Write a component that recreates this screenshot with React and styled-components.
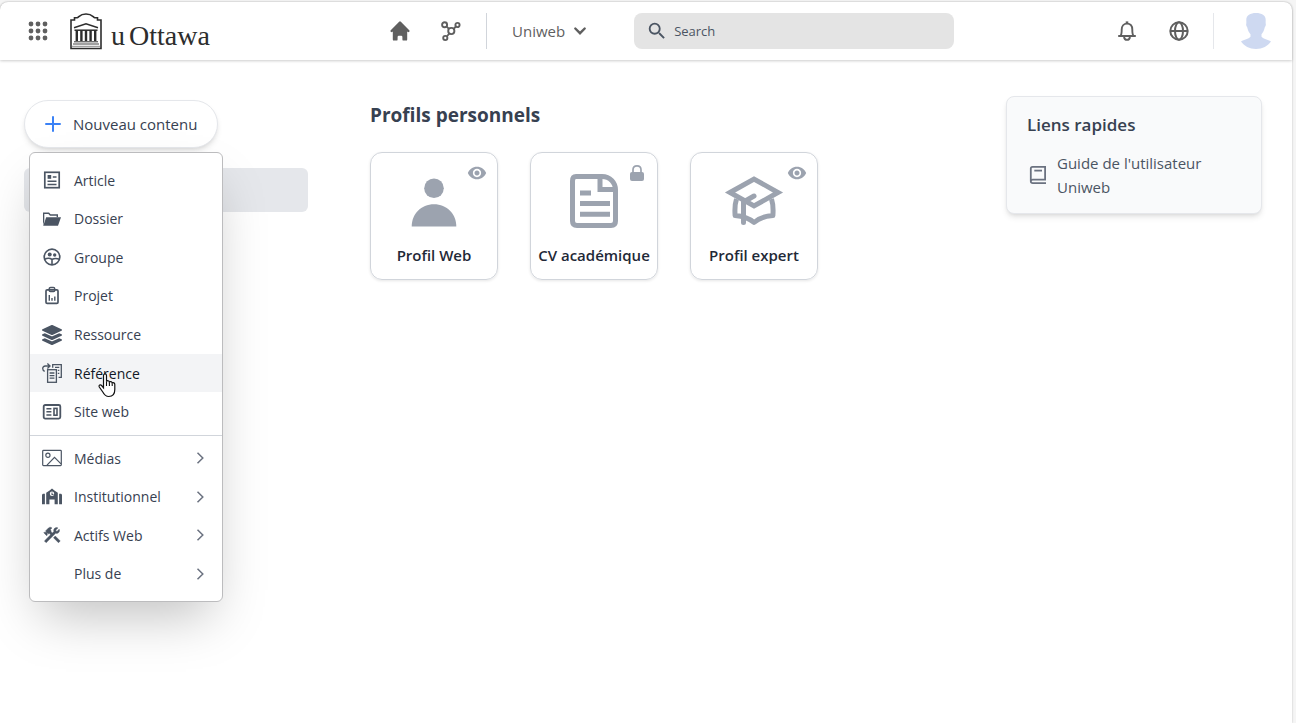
import React from 'react'
import styled, { createGlobalStyle } from 'styled-components'
import { HiHome } from 'react-icons/hi'
import { FaLayerGroup } from 'react-icons/fa'
import { MdSearch, MdVisibility } from 'react-icons/md'

const AppsIcon = () => (
  <svg width="20" height="20" viewBox="0 0 20 20" fill="currentColor">
    {[3, 10, 17].map((y) => [3, 10, 17].map((x) => (
      <circle key={`${x}-${y}`} cx={x} cy={y} r="2.4" />
    )))}
  </svg>
)

const TabaretIcon = () => (
  <svg width="32" height="37" viewBox="0 0 32 37" fill="none" stroke="#2d2d2d">
    <path d="M1 35.500V7h3.500V4.800H7C9 4.600 9.400 1 16 1s7 3.600 9 3.800h2.500V7H31v28.500z" strokeWidth="1.600" />
    <path d="M4 14.800L16 10.800l12 4" strokeWidth="1.500" />
    <path d="M4.500 17.200h23" strokeWidth="1.500" />
    <path d="M6.800 17v11M11.400 17v11M16 17v11M20.600 17v11M25.200 17v11" strokeWidth="2.400" />
    <path d="M4 28.800h24" strokeWidth="1" />
    <path d="M3 31h26" stroke="#8a8a8a" strokeWidth="1.600" />
    <path d="M2 33.300h28" stroke="#8a8a8a" strokeWidth="1" />
  </svg>
)

const NetworkIcon = () => (
  <svg width="24" height="24" viewBox="-4 -2 24 24" fill="none" stroke="currentColor" strokeWidth="1.900">
    <circle cx="3.600" cy="3.700" r="2.500" />
    <circle cx="16.500" cy="4" r="2.100" />
    <circle cx="10.300" cy="10" r="3.100" />
    <circle cx="4.300" cy="17" r="2.100" />
    <path d="M5.400 5.400l2.600 2.500M12.600 7.900l2.400-2.400M8.300 12.500l-2.500 3" />
  </svg>
)

const BellIcon = () => (
  <svg width="20" height="20" viewBox="0 0 20 20" fill="none" stroke="currentColor" strokeWidth="1.900">
    <path d="M1.200 15h17.600M3.400 15c1.200-1 1.300-2.600 1.300-6.400C4.700 5 6.700 2.600 10 2.600s5.300 2.400 5.300 6c0 3.800.1 5.400 1.300 6.400" />
    <path d="M10 .4v2" strokeWidth="2.600" />
    <path d="M7 16c.3 1.900 1.400 2.900 3 2.900s2.700-1 3-2.900" />
  </svg>
)

const GlobeIcon = () => (
  <svg width="20" height="20" viewBox="0 0 20 20" fill="none" stroke="currentColor" strokeWidth="2">
    <circle cx="10" cy="10" r="8.700" />
    <ellipse cx="10" cy="10" rx="4" ry="8.700" />
    <path d="M1.300 10h17.400" />
  </svg>
)

const AvatarIcon = () => (
  <svg width="32" height="36" viewBox="0 0 32 36" fill="#ced9f1">
    <path d="M16 0c5.500 0 10 2 9.700 7.500 0 1.200-.2 2 0 3 .5 1.500-.3 3-.9 3.700-.6 3-1.700 5.300-3.300 7v2.600c2 2.600 6.300 2.700 9.500 4.700C28 33 22.500 36 16 36S4 33 1 28.500c3.200-2 7.500-2.100 9.500-4.700v-2.600c-1.600-1.700-2.700-4-3.300-7-.6-.7-1.400-2.200-.9-3.700.2-1 0-1.800 0-3C6 2 10.500 0 16 0z" />
  </svg>
)

const ChevronDown = () => (
  <svg width="14" height="14" viewBox="0 0 14 14" fill="none" stroke="currentColor" strokeWidth="2.400" strokeLinecap="round">
    <path d="M2.300 4.500L7 9.200l4.700-4.700" />
  </svg>
)

const ChevronRight = () => (
  <svg width="12" height="12" viewBox="0 0 12 12" fill="none" stroke="#6b7280" strokeWidth="1.500">
    <path d="M3.500 .8L8.800 6l-5.300 5.200" />
  </svg>
)

const PlusIcon = () => (
  <svg width="16" height="16" viewBox="0 0 16 16" stroke="#3b82f6" strokeWidth="2" strokeLinecap="round">
    <path d="M8 1v14M1 8h14" />
  </svg>
)

const ArticleIcon = () => (
  <svg width="20" height="20" viewBox="0 0 20 20" fill="none" stroke="currentColor" strokeWidth="1.700">
    <rect x="2.800" y="2.300" width="14.400" height="15.400" />
    <path d="M5.500 11.300h9M5.500 14.500h9M10.800 7h3.700" strokeWidth="1.500" />
    <rect x="5.600" y="5" width="3.600" height="3.800" fill="currentColor" stroke="none" />
  </svg>
)

const FolderIcon = () => (
  <svg width="20" height="20" viewBox="0 0 20 20" fill="currentColor">
    <path d="M1 3.500h6l1.600 1.800H16v3h-1.400V6.700H8L6.400 5H2.300v7L1 16.300z" />
    <path d="M4.200 8.300H19l-3 8.400H1.200z" />
  </svg>
)

const GroupIcon = () => (
  <svg width="20" height="20" viewBox="0 0 20 20" fill="none" stroke="currentColor" strokeWidth="1.700">
    <circle cx="10" cy="10" r="7.800" />
    <circle cx="7.700" cy="7.400" r="2" fill="currentColor" stroke="none" />
    <circle cx="12.700" cy="8" r="1.700" fill="currentColor" stroke="none" />
    <path d="M2.600 12.300c2.800-1.500 5.500-1.300 7.400.2 2-1.200 4.600-1.400 7.400-.2M10 12.300v5.500" strokeWidth="1.600" />
  </svg>
)

const ProjectIcon = () => (
  <svg width="20" height="20" viewBox="0 0 20 20" fill="none" stroke="currentColor" strokeWidth="1.700">
    <rect x="4" y="3.800" width="12" height="13.600" rx="1.200" />
    <path d="M7.200 4.300V3c0-1 .6-1.500 1.500-1.500h2.600c.9 0 1.500.5 1.500 1.500v1.300c0 .8-.4 1.200-1.200 1.200H8.400c-.8 0-1.200-.4-1.200-1.200z" strokeWidth="1.400" />
    <path d="M7.300 9v5.800M10 12v2.800M12.800 10.500v4.300" strokeWidth="1.400" />
  </svg>
)

const ReferenceIcon = () => (
  <svg width="20" height="20" viewBox="0 0 20 20" fill="none" stroke="currentColor" strokeWidth="1.300">
    <rect x="5.600" y="6.700" width="8.800" height="12.600" />
    <path d="M7.600 10h4.800M7.600 12.600h4.800M7.600 15.200h4.800" />
    <path d="M10.700 4.800V1.700h8.600v12.600h-2.700M13 4.400h4.300M15.800 7.300h1.500M15.800 10.300h1.500" />
    <path d="M2.700 8.300C1.200 7.800.7 6.800.7 5.600c0-1.600 1-2.600 2.600-2.600h4.500M5.400.6L8 3 5.400 5.400" />
  </svg>
)

const SiteIcon = () => (
  <svg width="20" height="20" viewBox="0 0 20 20" fill="none" stroke="currentColor" strokeWidth="1.800">
    <rect x="1.700" y="3" width="16.600" height="13.600" rx="1.500" />
    <rect x="12" y="6.400" width="3" height="6.800" strokeWidth="1.600" />
    <path d="M4.400 6.700h5M4.400 9.800h5M4.400 12.900h5" strokeWidth="1.500" />
  </svg>
)

const MediaIcon = () => (
  <svg width="20" height="20" viewBox="0 0 20 20" fill="none" stroke="currentColor" strokeWidth="1.200">
    <rect x=".7" y="2.400" width="18.600" height="15.200" rx=".8" />
    <circle cx="5.900" cy="7.300" r="2.100" />
    <path d="M5 17.200l7.500-7.900 6.500 6.600" />
  </svg>
)

const InstitutionIcon = () => (
  <svg width="20" height="20" viewBox="0 0 20 20" fill="currentColor">
    <path d="M0 7.700l.9-.9h2v10.400H0zM17.100 6.800h2l.9.900v9.500h-2.900z" />
    <path fillRule="evenodd" d="M4.200 17.200V5.800L7.600 3.400 10 1.600l2.400 1.800 3.400 2.400v11.400h-3.200v-4.700H7.400v4.700zM10 4.600a2.200 2.200 0 100 4.400 2.200 2.200 0 000-4.400z" />
    <path d="M9.500 5.500h1V7h1v1h-2z" />
  </svg>
)

const ToolsIcon = () => (
  <svg width="20" height="20" viewBox="0 0 24 24" fill="currentColor" stroke="currentColor" strokeWidth=".5">
    <path d="M13.780 15.300l6 6 2.110-2.160-6-6zM17.500 10.100c-.390 0-.810-.050-1.140-.190L4.970 21.250l-2.110-2.110 7.410-7.400L8.500 9.960l-.720.700-1.450-1.410v2.860l-.700.700-3.520-3.560.700-.700h2.810l-1.400-1.410 3.560-3.560c1.170-1.170 3.050-1.170 4.220 0L9.890 5.740l1.410 1.400-.710.710 1.790 1.780 1.820-1.880c-.140-.330-.200-.750-.200-1.120 0-1.970 1.560-3.520 3.500-3.520.590 0 1.110.140 1.580.420L16.410 6.200l1.500 1.500 2.670-2.670c.280.470.420.970.420 1.600 0 1.920-1.550 3.470-3.500 3.470z" />
  </svg>
)

const PersonIcon = () => (
  <svg width="64" height="64" viewBox="0 0 64 64" fill="currentColor">
    <circle cx="32" cy="20.300" r="9.800" />
    <path d="M9.700 58.500C9.700 46 19 36.200 32 36.200s22.300 9.800 22.300 22.300z" />
  </svg>
)

const ResumeIcon = () => (
  <svg width="64" height="64" viewBox="0 0 64 64" fill="none" stroke="currentColor" strokeWidth="5">
    <path d="M14 8.500h26c8 0 13.500 6 13.500 13.500v31c0 3-1.500 4.500-4.500 4.500H15c-3 0-4.500-1.500-4.500-4.500V13c0-3 1-4.500 3.500-4.500z" />
    <path d="M38 9v12.500H53M18 25h11M18 35.500h30M18 46.200h30" />
  </svg>
)

const GraduateIcon = () => (
  <svg width="64" height="64" viewBox="0 0 64 64" fill="none" stroke="currentColor" strokeWidth="5">
    <path d="M8 24.500L32 11l24 13.500L32 38z" />
    <path d="M32 28l-10.500 6v20.500" strokeLinecap="round" />
    <path d="M14.500 31c-2 6-1.800 11-1.400 16.500 8 .6 14 2.600 18.900 7 4.900-4.400 10.900-6.400 18.900-7 .4-5.500.6-10.500-1.400-16.500" strokeLinejoin="round" />
  </svg>
)

const LockIcon = () => (
  <svg width="20" height="20" viewBox="0 0 20 20" fill="currentColor">
    <rect x="3" y="9" width="14" height="9" rx="2" />
    <path d="M6 10V6.800C6 4.300 7.500 2.900 10 2.900s4 1.400 4 3.900V10" fill="none" stroke="currentColor" strokeWidth="1.700" />
  </svg>
)

const BookIcon = () => (
  <svg width="22" height="22" viewBox="0 0 22 22" fill="none" stroke="#6b7280" strokeWidth="1.800">
    <path d="M19 19.200H5.800c-1.300 0-2-.8-2-2V4.600c0-1 .6-1.700 1.700-1.700h12.600v12.700H5.800c-1.300 0-2 .7-2 1.700" />
    <path d="M7.300 6.600h7.700" />
  </svg>
)

const HandCursor = () => (
  <svg width="18" height="25" viewBox="0 0 18 25">
    <path
      d="M5.500 14.800V2.500C5.500.400 8.500.400 8.500 2.500v6c.5-1.200 2.700-1 2.900.6.800-.9 2.500-.6 2.800.9 1-.7 2.600-.2 2.600 1.500v5c0 4-2 7-6 7-3.200 0-4.500-1.500-6-4.500L1.300 14c-.8-1.700 1-3 2.300-1.500z"
      fill="#fff"
      stroke="#111"
      strokeWidth="1.200"
    />
    <path d="M8.500 8.500v4.500M11.400 9.500v3.500M14.200 10.500V13" stroke="#111" strokeWidth="1.100" fill="none" />
  </svg>
)

const contentTypes = [
  { label: 'Article', icon: <ArticleIcon /> },
  { label: 'Dossier', icon: <FolderIcon /> },
  { label: 'Groupe', icon: <GroupIcon /> },
  { label: 'Projet', icon: <ProjectIcon /> },
  { label: 'Ressource', icon: <FaLayerGroup size={20} /> },
  { label: 'Référence', icon: <ReferenceIcon />, active: true },
  { label: 'Site web', icon: <SiteIcon /> },
]

const submenus = [
  { label: 'Médias', icon: <MediaIcon /> },
  { label: 'Institutionnel', icon: <InstitutionIcon /> },
  { label: 'Actifs Web', icon: <ToolsIcon /> },
  { label: 'Plus de' },
]

const profiles = [
  { label: 'Profil Web', icon: <PersonIcon />, badge: <MdVisibility size={20} /> },
  { label: 'CV académique', icon: <ResumeIcon />, badge: <LockIcon /> },
  { label: 'Profil expert', icon: <GraduateIcon />, badge: <MdVisibility size={20} /> },
]

const App = () => {
  return (
    <>
      <Global />
      <Shell>
        <Header>
          <Brand>
            <IconButton aria-label="Applications"><AppsIcon /></IconButton>
            <Logo href="#">
              <TabaretIcon />
              <LogoText>
                <span>u</span>
                <span>Ottawa</span>
              </LogoText>
            </Logo>
          </Brand>
          <Nav>
            <NavLink href="#" aria-label="Accueil"><HiHome size={24} /></NavLink>
            <NavLink href="#" aria-label="Réseau"><NetworkIcon /></NavLink>
            <Divider $color="#d1d5db" />
            <Switcher>Uniweb <ChevronDown /></Switcher>
          </Nav>
          <SearchBox>
            <MdSearch size={22} />
            <SearchInput type="search" placeholder="Search" aria-label="Search" />
          </SearchBox>
          <Account>
            <IconButton aria-label="Notifications"><BellIcon /></IconButton>
            <IconButton aria-label="Langue"><GlobeIcon /></IconButton>
            <Divider $color="#e5e7eb" />
            <IconButton aria-label="Compte"><AvatarIcon /></IconButton>
          </Account>
        </Header>

        <Body>
          <Sidebar>
            <Create>
              <CreateButton aria-haspopup="menu" aria-expanded="true">
                <PlusIcon />
                Nouveau contenu
              </CreateButton>
              <Menu>
                <MenuList $height={270}>
                  {contentTypes.map((item) => (
                    <MenuRow key={item.label}>
                      <MenuButton $active={item.active}>
                        <MenuIcon>{item.icon}</MenuIcon>
                        <MenuText>{item.label}</MenuText>
                      </MenuButton>
                      {item.active && <Pointer><HandCursor /></Pointer>}
                    </MenuRow>
                  ))}
                </MenuList>
                <Separator />
                <MenuList $height={154}>
                  {submenus.map((item) => (
                    <MenuRow key={item.label}>
                      <MenuButton>
                        <MenuIcon>{item.icon}</MenuIcon>
                        <MenuText>{item.label}</MenuText>
                        <ChevronRight />
                      </MenuButton>
                    </MenuRow>
                  ))}
                </MenuList>
              </Menu>
            </Create>
            <Selected />
          </Sidebar>

          <Main>
            <Title>Profils personnels</Title>
            <Cards>
              {profiles.map((p) => (
                <Card key={p.label} href="#">
                  <Badge>{p.badge}</Badge>
                  {p.icon}
                  <CardLabel>{p.label}</CardLabel>
                </Card>
              ))}
            </Cards>
          </Main>

          <Links>
            <LinksTitle>Liens rapides</LinksTitle>
            <QuickLink href="#">
              <BookIcon />
              <LinkText>Guide de l'utilisateur Uniweb</LinkText>
            </QuickLink>
          </Links>
        </Body>
      </Shell>
    </>
  )
}

export default App

const Global = createGlobalStyle`
* { box-sizing: border-box; }
body {
  margin: 0;
  background: #f5f5f5;
  color: #374151;
  font-family: 'Segoe UI', 'Open Sans', 'Noto Sans', sans-serif;
  font-size: 15px;
}
button, input {
  font: inherit;
  color: inherit;
  border: 0;
  padding: 0;
  background: none;
}
button { cursor: pointer; }
a { color: inherit; text-decoration: none; }
svg { display: block; flex: none; }
`

const Shell = styled.div`
margin: 2px 4px 0 0;
min-height: calc(100vh - 2px);
background: #fff;
border-radius: 8px 8px 0 0;
box-shadow: 0 0 2px rgba(0, 0, 0, 0.25);
`

const Header = styled.header`
display: flex;
align-items: center;
height: 58px;
padding: 0 20px 0 28px;
border-radius: 8px 8px 0 0;
box-shadow: 0 1px 3px rgba(0, 0, 0, 0.2);
`

const Brand = styled.div`
display: flex;
align-items: center;
gap: 22px;
width: 360px;
`

const Logo = styled.a`
display: flex;
align-items: center;
gap: 9px;
`

const LogoText = styled.span`
display: flex;
gap: 4px;
padding-top: 9px;
font-family: 'Liberation Serif', serif;
font-size: 28px;
line-height: 28px;
color: #2d2d2d;
`

const IconButton = styled.button`
display: flex;
color: #5f5f5f;
`

const Nav = styled.nav`
display: flex;
align-items: center;
gap: 25px;
color: #5f5f5f;
`

const NavLink = styled.a`
display: flex;
`

const Divider = styled.span`
width: 1px;
height: 36px;
background: ${(p) => p.$color};
`

const Switcher = styled.button`
display: flex;
align-items: center;
gap: 8px;
`

const SearchBox = styled.label`
display: flex;
align-items: center;
gap: 6px;
width: 320px;
height: 36px;
margin-left: 47px;
padding: 0 12px;
border-radius: 8px;
background: #e4e4e4;
color: #4b5563;
`

const SearchInput = styled.input`
flex: 1;
min-width: 0;
font-size: 13px;
outline: none;
&::placeholder {
  color: #4b5563;
  opacity: 1;
}
`

const Account = styled.div`
display: flex;
align-items: center;
margin-left: auto;
& > :nth-child(2) { margin: 0 24px 0 32px; }
& > :last-child { margin-left: 26px; }
`

const Body = styled.div`
display: flex;
align-items: flex-start;
padding: 36px 30px 0 24px;
`

const Sidebar = styled.aside`
width: 284px;
margin: 4px 62px 0 0;
`

const Create = styled.div`
position: relative;
width: max-content;
margin-bottom: 20px;
`

const CreateButton = styled.button`
display: flex;
align-items: center;
gap: 12px;
height: 48px;
padding: 0 20px;
border: 1px solid #e5e7eb;
border-radius: 24px;
background: #fff;
box-shadow: 0 4px 6px -1px rgba(0, 0, 0, 0.1), 0 2px 4px -2px rgba(0, 0, 0, 0.1);
`

const Menu = styled.div`
position: absolute;
top: 52px;
left: 5px;
z-index: 1;
width: 194px;
padding: 8px 0;
border: 1px solid #bcbcbe;
border-radius: 6px;
background: #fff;
box-shadow: 0 25px 50px -12px rgba(0, 0, 0, 0.25);
`

const MenuList = styled.ul`
display: grid;
grid-auto-rows: 1fr;
height: ${(p) => p.$height}px;
margin: 0;
padding: 0;
list-style: none;
`

const MenuRow = styled.li`
position: relative;
display: flex;
`

const MenuButton = styled.button`
flex: 1;
display: flex;
align-items: center;
gap: 12px;
padding: 0 16px 0 12px;
font-size: 14px;
text-align: left;
color: ${(p) => (p.$active ? '#111827' : '#374151')};
background: ${(p) => (p.$active ? '#f3f4f6' : 'transparent')};
`

const MenuIcon = styled.span`
width: 20px;
height: 20px;
color: #4b5563;
`

const MenuText = styled.span`
flex: 1;
`

const Pointer = styled.span`
position: absolute;
top: 19px;
left: 68px;
pointer-events: none;
`

const Separator = styled.hr`
height: 1px;
margin: 4px 0 3px;
border: 0;
background: #d1d5db;
`

const Selected = styled.div`
height: 44px;
border-radius: 6px;
background: #e5e7eb;
`

const Main = styled.main`
flex: 1;
`

const Title = styled.h1`
margin: 4px 0 22px;
font-size: 19px;
line-height: 30px;
font-weight: 700;
`

const Cards = styled.div`
display: flex;
flex-wrap: wrap;
gap: 32px;
`

const Card = styled.a`
position: relative;
display: flex;
flex-direction: column;
align-items: center;
width: 128px;
height: 128px;
padding-top: 15px;
border: 1px solid #d1d5db;
border-radius: 12px;
color: #9ca3af;
box-shadow: 0 1px 3px rgba(0, 0, 0, 0.1);
`

const Badge = styled.span`
position: absolute;
top: 10px;
right: 10px;
`

const CardLabel = styled.span`
margin-top: 11px;
font-size: 15px;
line-height: 24px;
font-weight: 600;
color: #1f2937;
white-space: nowrap;
`

const Links = styled.section`
width: 256px;
padding: 15px 20px 14px;
border: 1px solid #e5e7eb;
border-radius: 8px;
background: #f9fafb;
box-shadow: 0 4px 6px -1px rgba(0, 0, 0, 0.1), 0 2px 4px -2px rgba(0, 0, 0, 0.1);
`

const LinksTitle = styled.h2`
margin: 0 0 13px;
font-size: 17px;
line-height: 26px;
font-weight: 600;
`

const QuickLink = styled.a`
display: flex;
align-items: center;
gap: 8px;
color: #4b5563;
`

const LinkText = styled.span`
font-size: 15px;
line-height: 24px;
`
